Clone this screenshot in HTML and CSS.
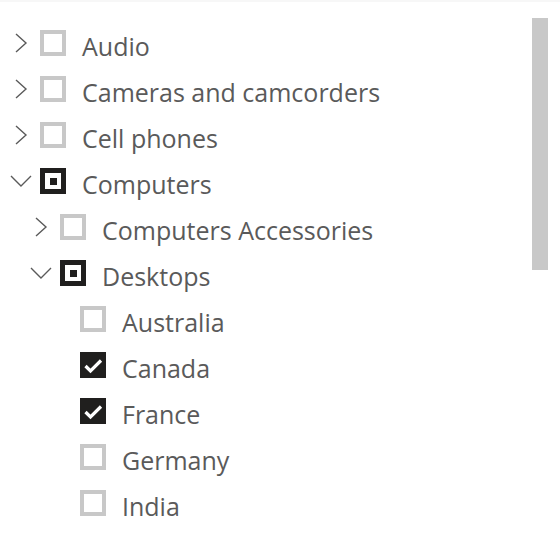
FILE: index.html
```html
<!DOCTYPE html>
<html>
<head>
<meta charset="utf-8">
<link rel="stylesheet" href="styles.css">
</head>
<body>
<div class="topline"></div>
<div class="panel">
  <ul class="tree">
    <li class="row lvl0"><span class="chev"><svg viewBox="0 0 26 20" width="26" height="20"><polyline points="8,1 18,10 8,19" /></svg></span><span class="box"></span><span class="label">Audio</span></li>
    <li class="row lvl0"><span class="chev"><svg viewBox="0 0 26 20" width="26" height="20"><polyline points="8,1 18,10 8,19" /></svg></span><span class="box"></span><span class="label">Cameras and camcorders</span></li>
    <li class="row lvl0"><span class="chev"><svg viewBox="0 0 26 20" width="26" height="20"><polyline points="8,1 18,10 8,19" /></svg></span><span class="box"></span><span class="label">Cell phones</span></li>
    <li class="row lvl0"><span class="chev"><svg viewBox="0 0 26 20" width="26" height="20"><polyline points="3,5 13,15 23,5" /></svg></span><span class="box partial"><span class="dot"></span></span><span class="label">Computers</span></li>
    <li class="row lvl1"><span class="chev"><svg viewBox="0 0 26 20" width="26" height="20"><polyline points="8,1 18,10 8,19" /></svg></span><span class="box"></span><span class="label">Computers Accessories</span></li>
    <li class="row lvl1"><span class="chev"><svg viewBox="0 0 26 20" width="26" height="20"><polyline points="3,5 13,15 23,5" /></svg></span><span class="box partial"><span class="dot"></span></span><span class="label">Desktops</span></li>
    <li class="row lvl2"><span class="chev"></span><span class="box"></span><span class="label">Australia</span></li>
    <li class="row lvl2"><span class="chev"></span><span class="box checked"><svg viewBox="0 0 26 26" width="26" height="26"><polyline points="5.5,14 10.5,19 21,8.5" /></svg></span><span class="label">Canada</span></li>
    <li class="row lvl2"><span class="chev"></span><span class="box checked"><svg viewBox="0 0 26 26" width="26" height="26"><polyline points="5.5,14 10.5,19 21,8.5" /></svg></span><span class="label">France</span></li>
    <li class="row lvl2"><span class="chev"></span><span class="box"></span><span class="label">Germany</span></li>
    <li class="row lvl2"><span class="chev"></span><span class="box"></span><span class="label">India</span></li>
  </ul>
  <div class="thumb"></div>
</div>
</body>
</html>
```

FILE: styles.css
```css
html, body {
  margin: 0;
  padding: 0;
  background: #ffffff;
}
body {
  font-family: "Open Sans", "Noto Sans", sans-serif;
  width: 560px;
  height: 548px;
  overflow: hidden;
}
.topline {
  height: 2px;
  background: #f7f7f7;
}
.panel {
  position: relative;
  height: 546px;
}
.tree {
  list-style: none;
  margin: 0;
  padding: 18px 0 0 8px;
}
.row {
  display: flex;
  align-items: center;
  height: 46px;
}
.lvl1 { padding-left: 20px; }
.lvl2 { padding-left: 40px; }
.chev {
  width: 26px;
  height: 20px;
  margin-right: 6px;
  flex: none;
  display: flex;
}
.lvl2 .chev { visibility: hidden; }
.chev svg polyline {
  fill: none;
  stroke: #5a5a5a;
  stroke-width: 1.4;
}
.box {
  width: 26px;
  height: 26px;
  box-sizing: border-box;
  border: 4px solid #c8c8c8;
  background: #fff;
  flex: none;
  display: flex;
  align-items: center;
  justify-content: center;
}
.box.partial {
  border: 5px solid #201f1e;
}
.box.partial .dot {
  width: 7px;
  height: 7px;
  background: #201f1e;
}
.box.checked {
  border: none;
  background: #201f1e;
}
.box.checked svg polyline {
  fill: none;
  stroke: #fff;
  stroke-width: 3.2;
}
.label {
  margin-left: 16px;
  margin-top: 6px;
  font-size: 25px;
  color: #5a5a5a;
  white-space: nowrap;
}
.thumb {
  position: absolute;
  left: 532px;
  top: 16px;
  width: 16px;
  height: 252px;
  background: #c8c8c8;
}
```
